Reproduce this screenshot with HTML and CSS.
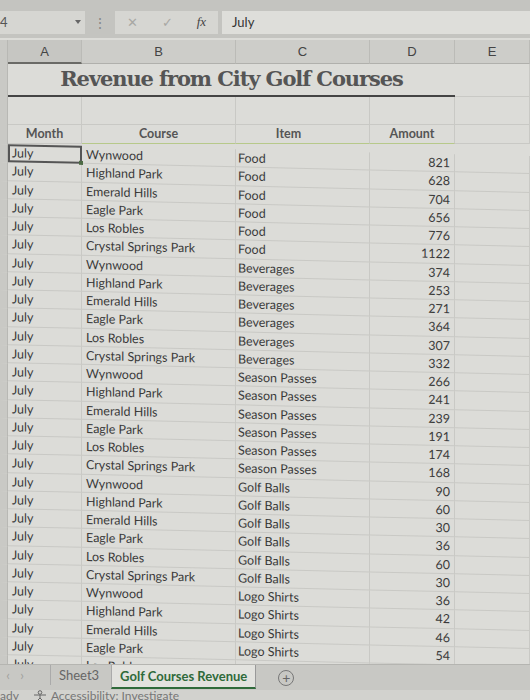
FILE: index.html
```html
<!DOCTYPE html>
<html lang="en">
<head>
    <meta charset="UTF-8">
    <title>Golf Courses Revenue</title>
    <link rel="stylesheet" href="styles.css">
</head>
<body>
    <!-- Formula bar -->
    <div class="toolbar">
        <div class="name-box"><span>4</span><span class="caret"></span></div>
        <div class="grip">&#8942;</div>
        <div class="fx-box">
            <span class="fx-btn">&#10005;</span>
            <span class="fx-btn">&#10003;</span>
            <span class="fx-label">fx</span>
        </div>
        <div class="formula">July</div>
    </div>

    <!-- Column letters -->
    <div class="row col-heads">
        <div class="rn"></div>
        <div class="c a sel">A</div>
        <div class="c b">B</div>
        <div class="c cc">C</div>
        <div class="c d">D</div>
        <div class="c e">E</div>
    </div>

    <div class="row title-row">
        <div class="rn"></div>
        <div class="title">Revenue from City Golf Courses</div>
        <div class="c e"></div>
    </div>

    <div class="row blank-row">
        <div class="rn"></div>
        <div class="c a"></div>
        <div class="c b"></div>
        <div class="c cc"></div>
        <div class="c d"></div>
        <div class="c e"></div>
    </div>

    <div class="row head-row">
        <div class="rn"></div>
        <div class="c a">Month</div>
        <div class="c b">Course</div>
        <div class="c cc">Item</div>
        <div class="c d">Amount</div>
        <div class="c e"></div>
    </div>

    <div class="data-clip">
        <div class="data" id="data"></div>
    </div>

    <!-- Sheet tabs -->
    <div class="tabs">
        <span class="nav">&#8249;</span>
        <span class="nav">&#8250;</span>
        <span class="tab">Sheet3</span>
        <span class="tab active">Golf Courses Revenue</span>
        <span class="tab-gap"></span>
        <span class="add">+</span>
    </div>

    <div class="status">
        <span>ady</span>
        <svg class="acc" width="14" height="12" viewBox="0 0 14 12">
            <circle cx="7" cy="2.5" r="1.8" fill="none" stroke="#666" stroke-width="1"/>
            <path d="M1 5 H13 M7 5 V8 L4 11 M7 8 L10 11" fill="none" stroke="#666" stroke-width="1"/>
        </svg>
        <span class="acc-text">Accessibility: Investigate</span>
    </div>

    <script>
        var courses = ['Wynwood', 'Highland Park', 'Emerald Hills', 'Eagle Park', 'Los Robles', 'Crystal Springs Park'];
        var items = [
            ['Food', [821, 628, 704, 656, 776, 1122]],
            ['Beverages', [374, 253, 271, 364, 307, 332]],
            ['Season Passes', [266, 241, 239, 191, 174, 168]],
            ['Golf Balls', [90, 60, 30, 36, 60, 30]],
            ['Logo Shirts', [36, 42, 46, 54, 58, 0]]
        ];

        var html = '';
        var n = 0;
        items.forEach(function (it) {
            it[1].forEach(function (amt, i) {
                if (n >= 29) return;
                html += '<div class="row drow">' +
                    '<div class="rn"></div>' +
                    '<div class="c a' + (n === 0 ? ' cur' : '') + '">July</div>' +
                    '<div class="c b">' + courses[i] + '</div>' +
                    '<div class="c cc">' + it[0] + '</div>' +
                    '<div class="c d">' + amt + '</div>' +
                    '<div class="c e"></div>' +
                    '</div>';
                n++;
            });
        });
        document.getElementById('data').innerHTML = html;
    </script>
</body>
</html>
```

FILE: styles.css
```css
/* General */
body {
    margin: 0;
    width: 530px;
    height: 700px;
    overflow: hidden;
    background: #dcdcd8;
    font-family: 'Lato', 'Open Sans', sans-serif;
    color: #3a3a3a;
}

/* Formula bar */
.toolbar {
    display: flex;
    align-items: center;
    height: 38px;
    background: #c4c4c0;
    padding-top: 6px;
    box-sizing: border-box;
}

.name-box {
    width: 85px;
    height: 23px;
    background: #d6d6d2;
    display: flex;
    align-items: center;
    justify-content: space-between;
    padding: 0 4px 0 0;
    box-sizing: border-box;
    font-size: 13px;
    color: #555;
}

.caret {
    width: 0;
    height: 0;
    border-left: 3px solid transparent;
    border-right: 3px solid transparent;
    border-top: 4px solid #666;
}

.grip {
    width: 30px;
    text-align: center;
    color: #888;
    font-size: 14px;
}

.fx-box {
    width: 103px;
    height: 23px;
    background: #d6d6d2;
    display: flex;
    align-items: center;
    justify-content: space-around;
    color: #a8a8a4;
    font-size: 13px;
}

.fx-label {
    font-family: 'Liberation Serif', serif;
    font-style: italic;
    color: #444;
}

.formula {
    flex: 1;
    height: 23px;
    margin-left: 4px;
    background: #dededa;
    font-size: 13px;
    line-height: 23px;
    padding-left: 10px;
    color: #333;
}

/* Grid */
.row {
    display: flex;
}

.rn {
    width: 8px;
    flex: none;
    background: #c9c9c5;
    border-right: 1px solid #b8b8b4;
    box-sizing: border-box;
}

.c {
    flex: none;
    box-sizing: border-box;
    border-right: 1px solid #c9c9c5;
    border-bottom: 1px solid #c9c9c5;
    overflow: hidden;
    white-space: nowrap;
}

.a { width: 74px; }
.b { width: 154px; }
.cc { width: 134px; }
.d { width: 85px; }
.e { width: 75px; }

.col-heads {
    height: 24px;
    margin-top: 2px;
    background: #cdcdc9;
}

.col-heads .c {
    text-align: center;
    line-height: 23px;
    font-family: 'Liberation Sans', sans-serif;
    font-size: 13px;
    color: #444;
    border-right-color: #bbbbb7;
    border-bottom-color: #b0b0ac;
}

.col-heads .sel {
    border-bottom: 2px solid #6a6a66;
    background: #c6c6c2;
}

.title-row {
    height: 33px;
}

.title {
    width: 447px;
    box-sizing: border-box;
    text-align: center;
    font-family: 'DejaVu Serif', serif;
    font-weight: bold;
    font-size: 21px;
    letter-spacing: -1.1px;
    line-height: 30px;
    color: #555;
    border-bottom: 2px solid #444;
}

.blank-row {
    height: 28px;
}

.head-row {
    height: 19px;
}

.head-row .c {
    font-weight: bold;
    font-size: 12.5px;
    text-align: center;
    line-height: 18px;
    color: #555;
}

.head-row .b,
.head-row .cc,
.head-row .d {
    border-bottom: 1px solid #b7c98a;
}

.head-row .cc {
    padding-right: 28px;
}

/* Data rows */
.data-clip {
    height: 520px;
    overflow: hidden;
}

.data {
    transform: skewY(1.3deg);
    transform-origin: 0 0;
}

.drow {
    height: 18.26px;
}

.drow .c {
    font-size: 12.5px;
    line-height: 17.5px;
    color: #3a3a3a;
}

.drow .a {
    padding-left: 4px;
}

.drow .b {
    padding-left: 4px;
}

.drow .cc {
    padding-left: 2px;
}

.drow .d {
    text-align: right;
    padding-right: 4px;
}

.drow .cur {
    border: 2px solid #555;
    padding-left: 2px;
    line-height: 14px;
    overflow: visible;
    position: relative;
}

.drow .cur::after {
    content: '';
    position: absolute;
    right: -3px;
    bottom: -3px;
    width: 4px;
    height: 4px;
    background: #4d6b45;
}

/* Sheet tabs */
.tabs {
    display: flex;
    align-items: flex-start;
    height: 26px;
    background: #c8c8c4;
    border-top: 1px solid #b5b5b1;
    box-sizing: border-box;
    font-size: 13px;
}

.nav {
    width: 12px;
    text-align: center;
    color: #a0a09c;
    line-height: 20px;
    margin-left: 2px;
}

.tab {
    padding: 0 8px;
    line-height: 20px;
    color: #666;
    border-left: 1px solid #aaa;
    margin-left: 22px;
}

.tab.active {
    margin-left: 4px;
    background: #e2e2de;
    color: #2f6a3a;
    font-weight: bold;
    line-height: 22px;
    border-bottom: 2px solid #2f6a3a;
    border-right: 1px solid #999;
}

.tab-gap {
    width: 22px;
}

.add {
    width: 14px;
    height: 14px;
    border: 1px solid #777;
    border-radius: 50%;
    text-align: center;
    line-height: 14px;
    color: #666;
    font-size: 14px;
    margin-top: 5px;
}

.status {
    display: flex;
    align-items: center;
    gap: 14px;
    height: 12px;
    background: #d2d2ce;
    font-size: 12px;
    color: #777;
    line-height: 12px;
    overflow: hidden;
}

.acc-text {
    margin-left: -10px;
}
```
